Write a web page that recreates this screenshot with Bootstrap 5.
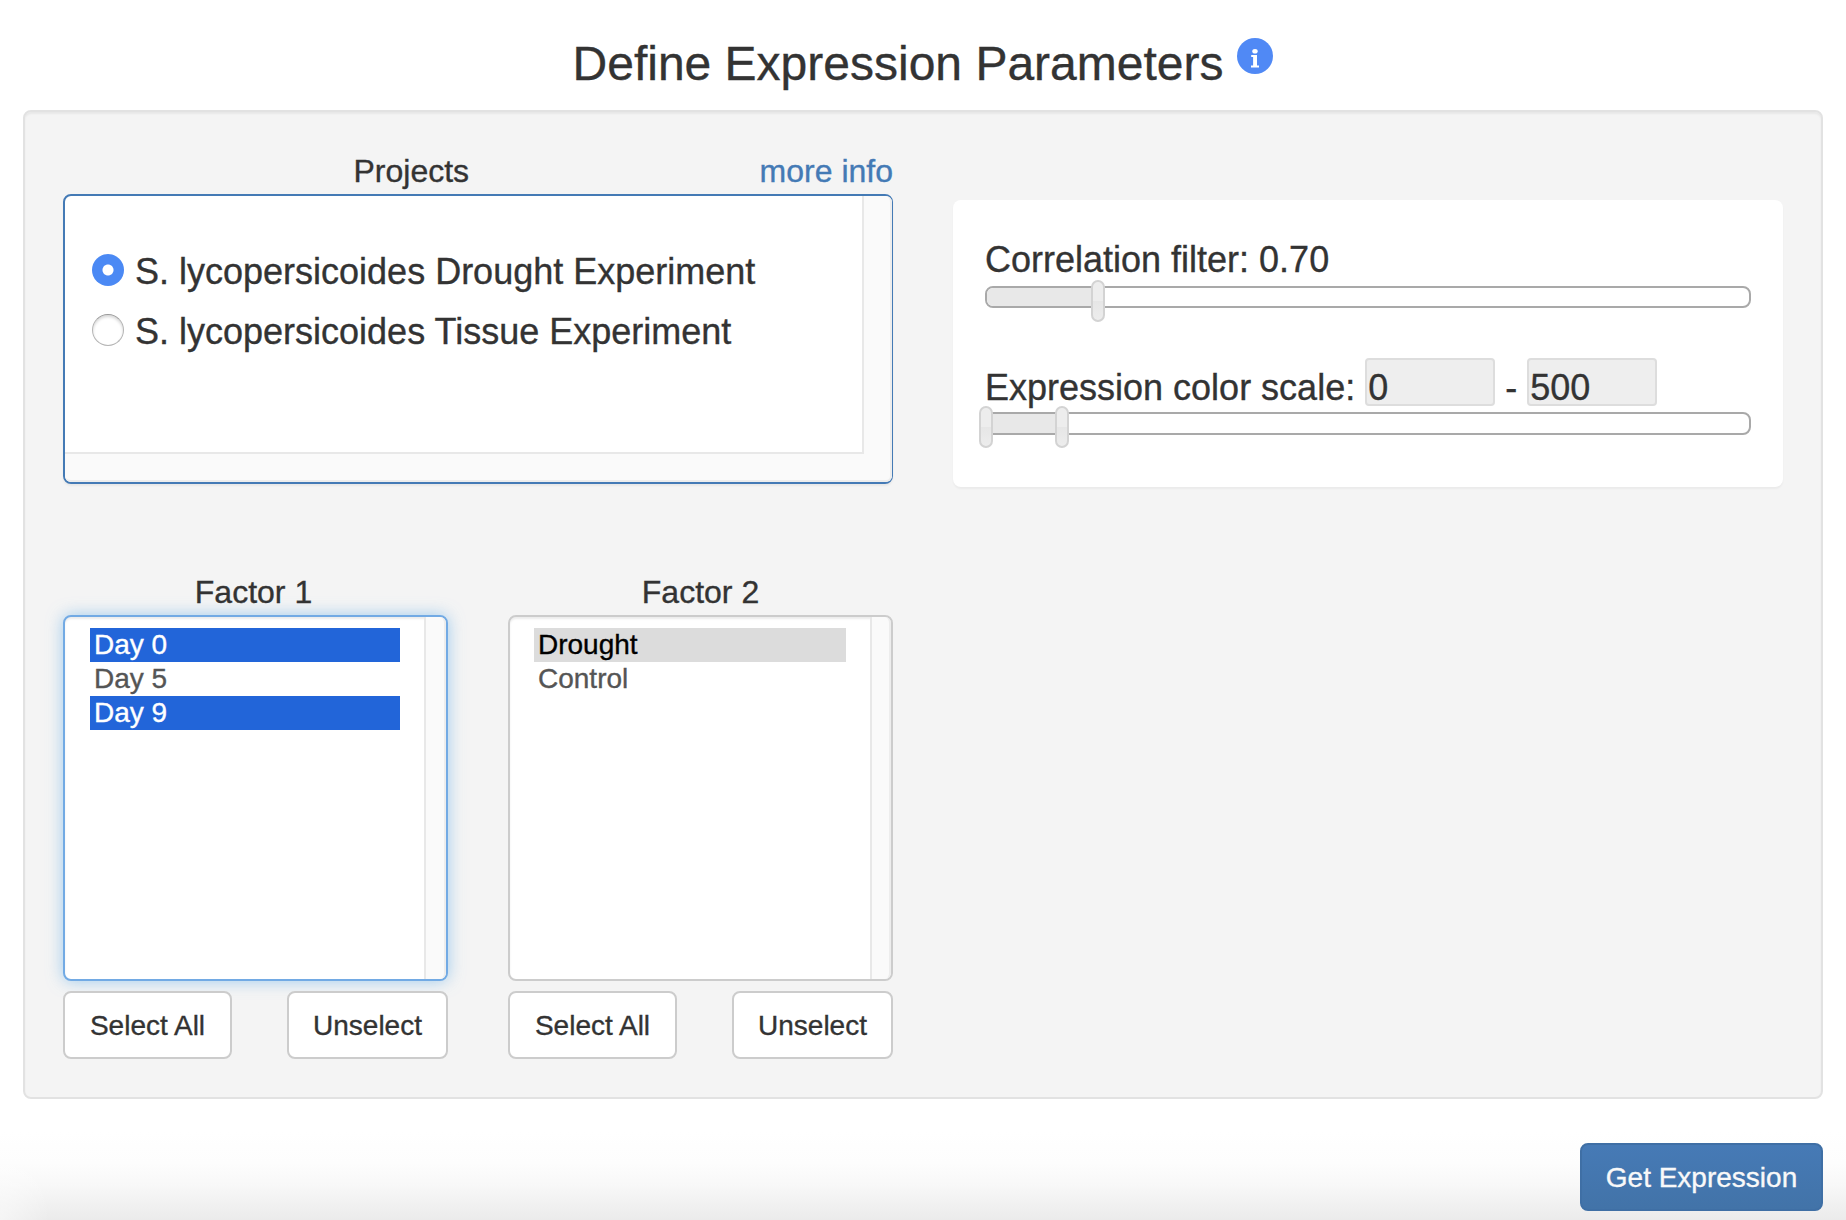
<!DOCTYPE html>
<html lang="en">
<head>
<meta charset="utf-8">
<title>Define Expression Parameters</title>
<meta name="viewport" content="width=device-width, initial-scale=1">
<link href="https://cdn.jsdelivr.net/npm/bootstrap@5.3.0/dist/css/bootstrap.min.css" rel="stylesheet">
<style>
body{font-family:"Liberation Sans",Arial,sans-serif;color:#333;background:#fff;min-height:1220px;overflow:hidden;-webkit-text-stroke:.35px currentColor}
.page-fade{right:0;bottom:0;left:0;height:88px;z-index:-1;
  background:radial-gradient(ellipse 50px 88px at 0 100%,rgba(255,255,255,.5),rgba(255,255,255,0)),linear-gradient(#fff,#fdfdfd 35%,#f8f8f8 60%,#ebebeb)}
.page-wrap{padding:38px 23px 0}
.page-title{font-size:48px;line-height:52px;font-weight:400;margin:0 0 20px}
.info-dot{width:36px;height:36px;margin:0 0 0 14px}
.panel-well{background:#f4f4f4;border:2px solid #e2e2e2;border-radius:8px;padding:37px 38px 38px;box-shadow:inset 0 2px 2px rgba(0,0,0,.05);gap:60px}
.half-col{width:830px}
.field-label{font-size:32px;line-height:45px}
.link-blue{color:#447ab5}
.list-frame{border:2px solid #ccc;border-radius:8px;background:#fff;box-shadow:inset 0 2px 2px rgba(0,0,0,.075)}
.projects-frame{height:290px;border-color:#447ab5;box-shadow:0 2px 2px rgba(0,0,0,.05);border-right-width:1px}
.projects-list{padding:46px 0 0 27px;font-size:36px;line-height:60px;border-bottom:2px solid #e8e8e8;height:258px}
.track-v{background:#fafafa;border-left:2px solid #e8e8e8;border-right:2px solid #ededed;border-radius:0 6px 6px 0}
.projects-frame .track-v{width:30px;height:258px;border-radius:0 6px 0 0}
.track-h{height:28px;background:#fafafa;border-bottom:2px solid #ededed;border-right:2px solid #ededed;border-radius:0 0 6px 6px}
.radio-dot{width:32px;height:32px;margin:-4px 11px 0 0;border-radius:50%;border:1px solid #b5b5b5;border-top-color:#999;box-shadow:inset 0 2px 3px rgba(0,0,0,.16);flex:none}
.radio-dot.is-on{border:0;box-shadow:none;background:radial-gradient(circle,#fff 5px,#4b89f4 6px)}
.factors{margin-top:86px;gap:60px}
.factor{width:385px}
.factor-frame{height:366px}
.factor-frame.is-focused{border-color:#72aae4;box-shadow:inset 0 2px 2px rgba(0,0,0,.075),0 0 16px rgba(102,175,233,.6)}
.factor-frame .track-v{width:21px}
.factor-frame.is-focused .track-v{width:22px}
.factor-options{padding:11px 24px 0;font-size:28px;line-height:34px;color:#555}
.is-focused .factor-options{padding-left:25px}
.factor-options li{padding-left:4px;height:34px}
.is-focused .opt-on{background:#2265d9;color:#fff}
.opt-on{background:#dcdcdc;color:#000}
.ctl-btn{height:68px;padding:1px 0 0;font-size:28px;line-height:64px;border:2px solid #ccc;border-radius:8px;background:#fff;color:#333;overflow:hidden}
.btn-all{width:169px}.btn-none{width:161px}
.submit-btn{width:243px;background:#447ab5;border-color:#3f6fa5;color:#f9f9f9;background-image:linear-gradient(#467ab6,#4273a8)}
.filter-card{height:287px;margin-top:51px;padding:35px 32px 0;background:#fff;border-radius:8px;box-shadow:0 2px 2px rgba(0,0,0,.04);font-size:36px}
.filter-text{line-height:50px}
.scale-row{margin-top:50px;height:48px;line-height:48px}
.scale-row>span{padding-top:6px}
.scale-box{width:130px;height:48px;border:2px solid #ddd;border-radius:4px;background:#eee;padding:6px 0 0 1px;line-height:44px}
.scale-gap{width:32px;text-align:center}
.slider-bar{height:22px;border:2px solid #a9a9a9;border-radius:8px;background:#fff;margin-top:1px}
.slider-fill{height:100%;background:#e8e8e8;border-radius:6px 0 0 6px}
.slider-grip{top:-8px;width:14px;height:42px;margin-left:-9px;border:2px solid #d3d3d3;border-radius:7px;background:linear-gradient(#ededed 50%,#e6e6e6 50%,#ededed)}
</style>
</head>
<body>
<div class="page-fade position-absolute"></div>
<main class="page-wrap">
  <h1 class="page-title d-flex justify-content-center align-items-start">Define Expression Parameters
    <svg class="info-dot" viewBox="0 0 36 36" aria-label="info"><circle cx="18" cy="18" r="18" fill="#5089f5"/><ellipse cx="18" cy="13.3" rx="2.7" ry="2.3" fill="#fff" stroke="none"/><path d="M14.2 17h5.8v10.6h2v2h-8v-2h2.1v-8.5h-1.9z" fill="#fff"/></svg>
  </h1>
  <section class="panel-well d-flex align-items-start">
    <div class="half-col">
      <div class="d-flex field-label"><span class="flex-grow-1 text-center">Projects</span><a href="#" class="link-blue text-decoration-none">more info</a></div>
      <div class="list-frame projects-frame">
        <div class="d-flex">
          <div class="projects-list flex-grow-1">
            <div class="d-flex align-items-center"><span class="radio-dot is-on"></span><span class="proj-name">S. lycopersicoides Drought Experiment</span></div>
            <div class="d-flex align-items-center"><span class="radio-dot"></span><span class="proj-name">S. lycopersicoides Tissue Experiment</span></div>
          </div>
          <div class="track-v"></div>
        </div>
        <div class="track-h"></div>
      </div>
      <div class="factors d-flex">
        <div class="factor">
          <div class="field-label text-center pe-1">Factor 1</div>
          <div class="list-frame factor-frame is-focused d-flex">
            <ul class="factor-options list-unstyled mb-0 flex-grow-1"><li class="opt-on">Day 0</li><li>Day 5</li><li class="opt-on">Day 9</li></ul>
            <div class="track-v"></div>
          </div>
          <div class="d-flex justify-content-between" style="margin-top:10px"><button class="btn ctl-btn btn-all">Select All</button><button class="btn ctl-btn btn-none">Unselect</button></div>
        </div>
        <div class="factor">
          <div class="field-label text-center">Factor 2</div>
          <div class="list-frame factor-frame d-flex">
            <ul class="factor-options list-unstyled mb-0 flex-grow-1"><li class="opt-on">Drought</li><li>Control</li></ul>
            <div class="track-v"></div>
          </div>
          <div class="d-flex justify-content-between" style="margin-top:10px"><button class="btn ctl-btn btn-all">Select All</button><button class="btn ctl-btn btn-none">Unselect</button></div>
        </div>
      </div>
    </div>
    <div class="half-col filter-card">
      <div class="filter-text">Correlation filter: 0.70</div>
      <div class="slider-bar position-relative"><div class="slider-fill" style="width:14.6%"></div><span class="slider-grip position-absolute" style="left:14.8%"></span></div>
      <div class="scale-row d-flex align-items-start"><span>Expression color scale:</span><output class="scale-box" style="margin-left:10px">0</output><span class="scale-gap">-</span><output class="scale-box">500</output></div>
      <div class="slider-bar position-relative" style="margin-top:6px;height:23px"><div class="slider-fill" style="width:10%"></div><span class="slider-grip position-absolute" style="left:.1%"></span><span class="slider-grip position-absolute" style="left:10.1%"></span></div>
    </div>
  </section>
  <div class="d-flex justify-content-end" style="margin-top:44px"><button class="btn ctl-btn submit-btn">Get Expression</button></div>
</main>
<script src="https://cdn.jsdelivr.net/npm/bootstrap@5.3.0/dist/js/bootstrap.bundle.min.js"></script>
</body>
</html>
